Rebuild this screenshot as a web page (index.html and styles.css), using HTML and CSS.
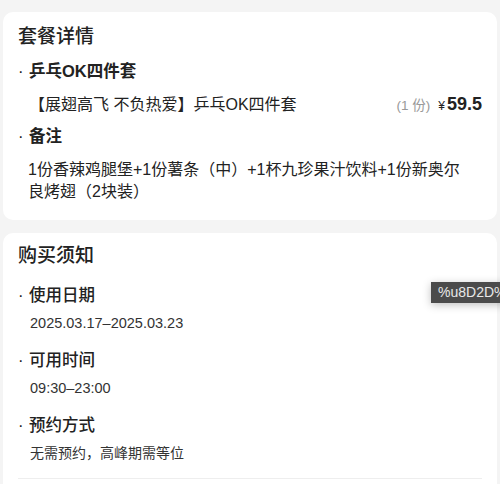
FILE: index.html
```html
<!DOCTYPE html>
<html lang="zh">
<head>
  <meta charset="UTF-8" />
  <title>套餐详情</title>
  <link rel="stylesheet" href="styles.css">
</head>
<body>
  <div class="page">
    <section class="card">
      <h2 class="card-title">套餐详情</h2>
      <div class="item-head"><span class="dot">·</span>乒乓OK四件套</div>
      <div class="product">
        <span class="product-name">【展翅高飞 不负热爱】乒乓OK四件套</span>
        <span class="qty">(1 份)</span>
        <span class="price"><small>¥</small>59.5</span>
      </div>
      <div class="item-head"><span class="dot">·</span>备注</div>
      <p class="note">1份香辣鸡腿堡+1份薯条（中）+1杯九珍果汁饮料+1份新奥尔良烤翅（2块装）</p>
    </section>

    <section class="card notice">
      <h2 class="card-title">购买须知</h2>
      <div class="rule">
        <div class="rule-head"><span class="dot">·</span>使用日期</div>
        <div class="rule-value">2025.03.17–2025.03.23</div>
      </div>
      <div class="rule">
        <div class="rule-head"><span class="dot">·</span>可用时间</div>
        <div class="rule-value">09:30–23:00</div>
      </div>
      <div class="rule">
        <div class="rule-head"><span class="dot">·</span>预约方式</div>
        <div class="rule-value text">无需预约，高峰期需等位</div>
      </div>
      <div class="divider"></div>
      <div class="tooltip">%u8D2D%u4E70</div>
    </section>
  </div>
</body>
</html>
```

FILE: styles.css
```css
html, body { margin: 0; overflow: hidden; }
body {
  background: #f4f4f4;
  font-family: "Liberation Sans", "Noto Sans CJK SC", sans-serif;
  color: #222;
}
.page { padding: 12px 3px; display: flex; flex-direction: column; gap: 13px; }
.card { background: #fff; border-radius: 10px; padding: 13px 15px 17px; position: relative; }
.card-title { margin: 0; font-size: 19px; line-height: 24px; font-weight: 500; color: #222; }

.item-head { margin-top: 10px; font-size: 16.5px; line-height: 24px; font-weight: 700; display: flex; }
.dot { width: 11px; font-weight: 400; }
.product { margin-top: 9px; padding-left: 11px; display: flex; align-items: baseline; font-size: 16px; line-height: 24px; color: #222; }
.product-name { flex: 1; }
.qty { color: #999; font-size: 13.5px; margin-right: 8px; }
.price { font-size: 18px; font-weight: 700; }
.price small { font-size: 12px; font-weight: 400; margin-right: 2px; }
.product + .item-head { margin-top: 6px; }
.note { margin: 11px 0 0; padding: 0 8px 0 10px; font-size: 16px; line-height: 22px; color: #222; }

.notice { padding: 11px 15px 0; }
.rule { margin-top: 15px; }
.rule-head { font-size: 16.5px; line-height: 24px; font-weight: 500; display: flex; }
.rule-value { margin-top: 6px; padding-left: 12px; font-size: 14.5px; line-height: 20px; color: #333; }
.rule-value.text { font-size: 14px; }
.divider { margin-top: 15px; border-top: 1px solid #eee; height: 40px; }

.tooltip {
  position: absolute;
  left: 428px;
  top: 49px;
  height: 21px;
  line-height: 21px;
  padding: 0 7px;
  background: #4b4b4b;
  color: #e8e8e8;
  font-size: 14px;
  white-space: nowrap;
  box-shadow: 0 2px 8px rgba(0, 0, 0, 0.25);
}
```
